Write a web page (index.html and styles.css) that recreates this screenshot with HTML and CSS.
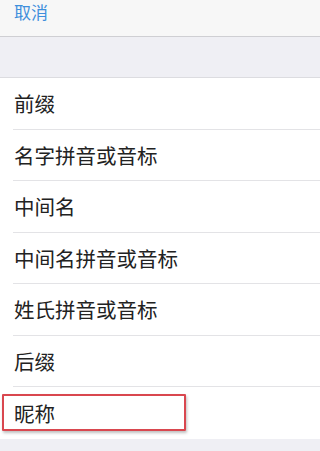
FILE: index.html
```html
<!DOCTYPE html>
<html lang="zh">
<head>
  <meta charset="UTF-8" />
  <meta name="viewport" content="width=device-width, initial-scale=1" />
  <title>添加字段</title>
  <link rel="stylesheet" href="styles.css">
</head>
<body>

  <!-- Barre du haut -->
  <header class="nav">
    <span class="cancel">取消</span>
  </header>

  <div class="spacer"></div>

  <!-- Liste des champs -->
  <ul class="fields">
    <li>前缀</li>
    <li>名字拼音或音标</li>
    <li>中间名</li>
    <li>中间名拼音或音标</li>
    <li>姓氏拼音或音标</li>
    <li>后缀</li>
    <li class="marked">昵称<span class="highlight"></span></li>
  </ul>

</body>
</html>
```

FILE: styles.css
```css
body {
  font-family: "Noto Sans CJK SC", "Noto Sans", sans-serif;
  margin: 0;
  padding: 0;
  background: #efeff4;
  height: 451px;
  overflow: hidden;
}
.nav {
  height: 37px;
  background: #f7f7f7;
  border-bottom: 1px solid #cfcfd3;
  box-sizing: border-box;
  padding: 3px 14px 0;
}
.cancel {
  display: block;
  color: #3f8fdc;
  font-size: 17px;
  line-height: 17px;
}
.spacer {
  height: 40px;
  border-bottom: 1px solid #dcdce0;
}
.fields {
  list-style: none;
  margin: 0;
  padding: 0 0 0 13px;
  background: #fff;
}
.fields li {
  height: 51.5px;
  box-sizing: border-box;
  border-bottom: 1px solid #e3e3e6;
  display: flex;
  align-items: center;
  font-size: 20.5px;
  color: #222;
  padding-left: 1px;
}
.fields li:last-child {
  border-bottom: none;
}
.marked {
  position: relative;
}
.highlight {
  position: absolute;
  left: -11px;
  top: 7px;
  width: 184px;
  height: 37px;
  box-sizing: border-box;
  border: 2px solid #d9474f;
  border-radius: 1px;
  box-shadow: 1px 2px 3px rgba(0, 0, 0, 0.25);
}
```
